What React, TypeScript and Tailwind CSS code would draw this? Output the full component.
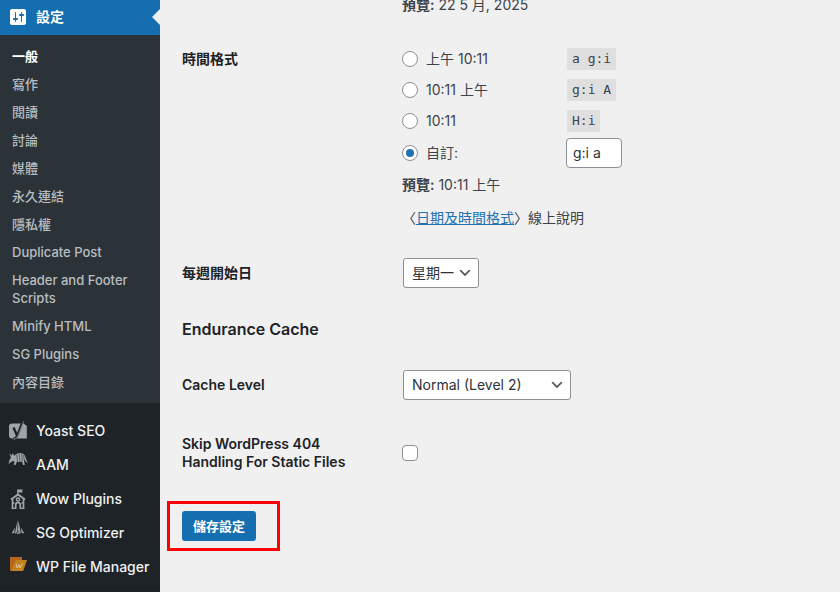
import type { ReactNode } from "react";

const submenu = [
  "一般",
  "寫作",
  "閱讀",
  "討論",
  "媒體",
  "永久連結",
  "隱私權",
  "Duplicate Post",
  "Header and Footer Scripts",
  "Minify HTML",
  "SG Plugins",
  "內容目錄",
];

const timeFormats = [
  { value: "a g:i", label: "上午 10:11" },
  { value: "g:i A", label: "10:11 上午" },
  { value: "H:i", label: "10:11" },
];

function SettingsIcon() {
  return (
    <svg viewBox="0 0 20 20" className="size-5" fill="currentColor" aria-hidden="true">
      <path
        fillRule="evenodd"
        d="M18 16V4c0-1.100-.9-2-2-2H4c-1.100 0-2 .9-2 2v12c0 1.100.9 2 2 2h12c1.100 0 2-.9 2-2zM8 11h1c.55 0 1 .45 1 1s-.45 1-1 1H8v1.500c0 .28-.22.500-.5.500s-.5-.22-.5-.5V13H6c-.55 0-1-.45-1-1s.45-1 1-1h1V5.500c0-.28.22-.5.500-.5s.5.220.5.500V11zm5-2h-1c-.55 0-1-.45-1-1s.45-1 1-1h1V5.500c0-.28.220-.5.500-.5s.5.220.5.500V7h1c.55 0 1 .45 1 1s-.45 1-1 1h-1v5.500c0 .280-.22.500-.5.500s-.5-.22-.5-.5V9z"
      />
    </svg>
  );
}

function YoastIcon() {
  return (
    <svg viewBox="0 0 20 20" className="size-5" aria-hidden="true">
      <path d="M4 2.500h11.500L18.800 5v12.500H4a3 3 0 0 1-3-3v-9a3 3 0 0 1 3-3z" fill="currentColor" />
      <path d="M5.500 6.500l3.500 8M14.500 1L9.800 13.500c-.8 2.500-2 4-4.300 4.200" fill="none" stroke="#1d2327" strokeWidth="2.400" />
      <path d="M15.600.5L10.600 13.500c-1 2.700-2.200 4.500-5 4.800" fill="none" stroke="currentColor" strokeWidth="0.8" />
    </svg>
  );
}

function AardvarkIcon() {
  return (
    <svg viewBox="0 0 20 20" className="size-5" aria-hidden="true">
      <path
        d="M1 1l2.500 2.500L5 1l1 3c1.500-2 3.500-3 6-3 3 0 5 1.800 5.800 5 .3 1.500 1 3 2.200 5-2-.8-2.800-2-3.300-3.500L16 9l.8 4H15l-1-3.500-2.500.5-2.500-.4L7.500 13H5.800l.7-3.500L5 9l-2 1-2.500 2L1.500 8 3 5.500z"
        fill="currentColor"
      />
      <path d="M8.500 2.500L9.500 9M11 1.500l1 8M13.500 1.500l1 7.500M15.500 3l.8 5" fill="none" stroke="#1d2327" strokeWidth="0.5" />
    </svg>
  );
}

function CastleIcon() {
  return (
    <svg viewBox="0 0 20 20" className="size-5" fill="none" stroke="currentColor" aria-hidden="true">
      <path d="M9.700 6V.500" strokeWidth="1.200" />
      <path d="M10 .5h5l-1 1.500 1 1.500h-5z" fill="currentColor" stroke="none" />
      <path d="M3 10.500l7-5 7 5" strokeWidth="2" />
      <path d="M4.500 10v9.500M15.500 10v9.500M7.700 19.500V16a2.300 2.300 0 0 1 4.600 0v3.500M3.500 19.500h4.800M11.700 19.500h4.800M4 14h2.500M13.500 14H16" strokeWidth="1.700" />
      <circle cx="10" cy="10.500" r="1.600" strokeWidth="1.500" />
    </svg>
  );
}

function OptimizerIcon() {
  return (
    <svg viewBox="0 0 20 20" className="size-5" fill="currentColor" aria-hidden="true">
      <path d="M9.500 0v10L8 14l-1-1zM10.400 0l2.300 13-1 1-1.700-4zM7 7.500L6.300 13l-2.800.5zM12.900 7.500l.7 5.500 2.800.5zM10 10.500l1 3.500H9z" />
    </svg>
  );
}

function FolderIcon() {
  return (
    <svg viewBox="0 0 20 20" className="size-5" aria-hidden="true">
      <path d="M2 0h12v4L9 14H3a1 1 0 0 1-1-1z" fill="#b5651d" />
      <path d="M8 3h11l-3.500 10a1 1 0 0 1-1 1H3z" fill="#c4821d" />
      <path d="M8 6.500L9.200 11l2-3.500.9 3.500L14.500 6.500" fill="none" stroke="#d9c6a5" />
    </svg>
  );
}

// image icons sit at the top of the row, font icons in its middle
const plugins: { name: string; icon: ReactNode; slot: string }[] = [
  { name: "Yoast SEO", icon: <YoastIcon />, slot: "text-[#a0a5aa]" },
  { name: "AAM", icon: <AardvarkIcon />, slot: "self-start pt-1 text-[#a0a5aa]" },
  { name: "Wow Plugins", icon: <CastleIcon />, slot: "text-[#a0a5aa]" },
  { name: "SG Optimizer", icon: <OptimizerIcon />, slot: "self-start pt-1 text-[#a0a5aa]" },
  { name: "WP File Manager", icon: <FolderIcon />, slot: "text-[#a0a5aa]" },
];

function Sidebar() {
  return (
    <nav className="w-40 shrink-0 bg-[#1d2327]">
      <a href="#settings" className="relative flex h-[35px] items-center gap-2 bg-[#146eb0] pb-px pl-2 text-sm font-semibold text-white">
        <SettingsIcon />
        設定
        <span className="absolute right-0 top-[9px] border-y-8 border-r-8 border-y-transparent border-r-[#f0f0f0]" />
      </a>
      <ul className="bg-[#2c3338] py-[7px] text-[13px] leading-[18px]">
        {submenu.map((item, i) => (
          <li key={item}>
            <a
              href={`#item-${i}`}
              className={
                i === 0
                  ? "block px-3 py-[5px] font-semibold text-white"
                  : "block px-3 py-[5px] font-medium text-[#b9bdc1]"
              }
            >
              {item}
            </a>
          </li>
        ))}
      </ul>
      <ul className="border-b border-[#1a1f23] pb-1 pt-[11px] text-sm font-medium text-[#f0f0f1]">
        {plugins.map((p, i) => (
          <li key={p.name}>
            <a href={`#plugin-${i}`} className="flex h-[34px] items-center gap-2 whitespace-nowrap pl-2">
              <span className={p.slot}>{p.icon}</span>
              {p.name}
            </a>
          </li>
        ))}
      </ul>
    </nav>
  );
}

const radioClass =
  "grid size-4 shrink-0 appearance-none place-items-center rounded-full border border-[#8c8f94] bg-white checked:before:size-2 checked:before:rounded-full checked:before:bg-[#2271b1]";

function TimeFormat() {
  return (
    <fieldset aria-labelledby="time_format">
      {timeFormats.map((f) => (
        <label key={f.value} className="flex h-[31px] items-center">
          <input type="radio" name="time_format" value={f.value} className={radioClass} />
          <span className="ml-2 w-[141px]">{f.label}</span>
          <code className="bg-[#dfdfe0] px-[5px] py-px font-['DejaVu_Sans_Mono','Noto_Sans_CJK_TC',monospace] text-[13px] leading-5">
            {f.value}
          </code>
        </label>
      ))}
      <div className="flex h-[33px] items-center">
        <input type="radio" id="custom" name="time_format" value="custom" defaultChecked className={radioClass} />
        <label htmlFor="custom" className="ml-2 w-[140px]">
          自訂:
        </label>
        <input
          type="text"
          aria-label="自訂時間格式"
          defaultValue="g:i a"
          className="h-[30px] w-14 rounded border border-[#8c8f94] bg-white px-1.5 text-[#2c3338]"
        />
      </div>
      <p className="leading-[31px]">
        <strong className="font-semibold">預覽:</strong> 10:11 上午
      </p>
      <p className="leading-[35px]">
        〈
        <a href="#docs" className="text-[#2271b1] underline">
          日期及時間格式
        </a>
        〉線上說明
      </p>
    </fieldset>
  );
}

function Select({ id, options, className }: { id: string; options: string[]; className: string }) {
  return (
    <div className={`relative ${className}`}>
      <select
        id={id}
        className="h-[30px] w-full appearance-none rounded-[3px] border border-[#8c8f94] bg-white pl-2 text-sm text-[#2c3338]"
      >
        {options.map((o) => (
          <option key={o}>{o}</option>
        ))}
      </select>
      <svg
        viewBox="0 0 20 20"
        className="pointer-events-none absolute right-1.5 top-[7px] size-4"
        fill="#555"
        aria-hidden="true"
      >
        <path d="M5 6l5 5 5-5 2 1-7 7-7-7 2-1z" />
      </svg>
    </div>
  );
}

const rowClass = "grid grid-cols-[220px_1fr]";
const thClass = "pr-10 font-semibold leading-[18px] text-[#1d2327]";

export default function App() {
  return (
    <div
      lang="zh-Hant"
      className="flex h-screen overflow-hidden bg-[#f0f0f0] font-['Inter','Noto_Sans_CJK_TC',sans-serif] text-sm text-[#3c434a]"
    >
      <Sidebar />
      <main className="min-w-0 flex-1 pl-[22px] text-sm">
        <form>
          <div className={rowClass}>
            <p className="col-start-2 -mt-[5px] leading-5">
              <strong className="font-semibold">預覽:</strong> 22 5 月, 2025
            </p>
          </div>
          <div className={`${rowClass} pt-7`}>
            <div id="time_format" className={`${thClass} pt-[7px]`}>
              時間格式
            </div>
            <TimeFormat />
          </div>
          <div className={`${rowClass} items-center pt-[23px]`}>
            <label htmlFor="start_of_week" className={thClass}>
              每週開始日
            </label>
            <Select id="start_of_week" options={["星期一"]} className="ml-px w-[76px]" />
          </div>
          <h2 className="mt-7 text-base font-semibold leading-[26px] text-[#1d2327]">Endurance Cache</h2>
          <div className={`${rowClass} items-center pt-7`}>
            <label htmlFor="cache_level" className={thClass}>
              Cache Level
            </label>
            <Select id="cache_level" options={["Normal (Level 2)"]} className="ml-px w-[168px]" />
          </div>
          <div className={`${rowClass} items-center pt-[35px]`}>
            <label htmlFor="skip_404" className={thClass}>
              Skip WordPress 404 Handling For Static Files
            </label>
            <input
              type="checkbox"
              id="skip_404"
              className="size-4 appearance-none rounded border border-[#8c8f94] bg-white"
            />
          </div>
          <div className="-ml-[15px] mt-[30px] w-[113px] border-[3px] border-[#fb0007] py-[7px] pl-3">
            <button type="submit" className="block h-[30px] rounded-[3px] bg-[#146eb0] px-[11px] text-[13px] font-semibold text-white">
              儲存設定
            </button>
          </div>
        </form>
      </main>
    </div>
  );
}
